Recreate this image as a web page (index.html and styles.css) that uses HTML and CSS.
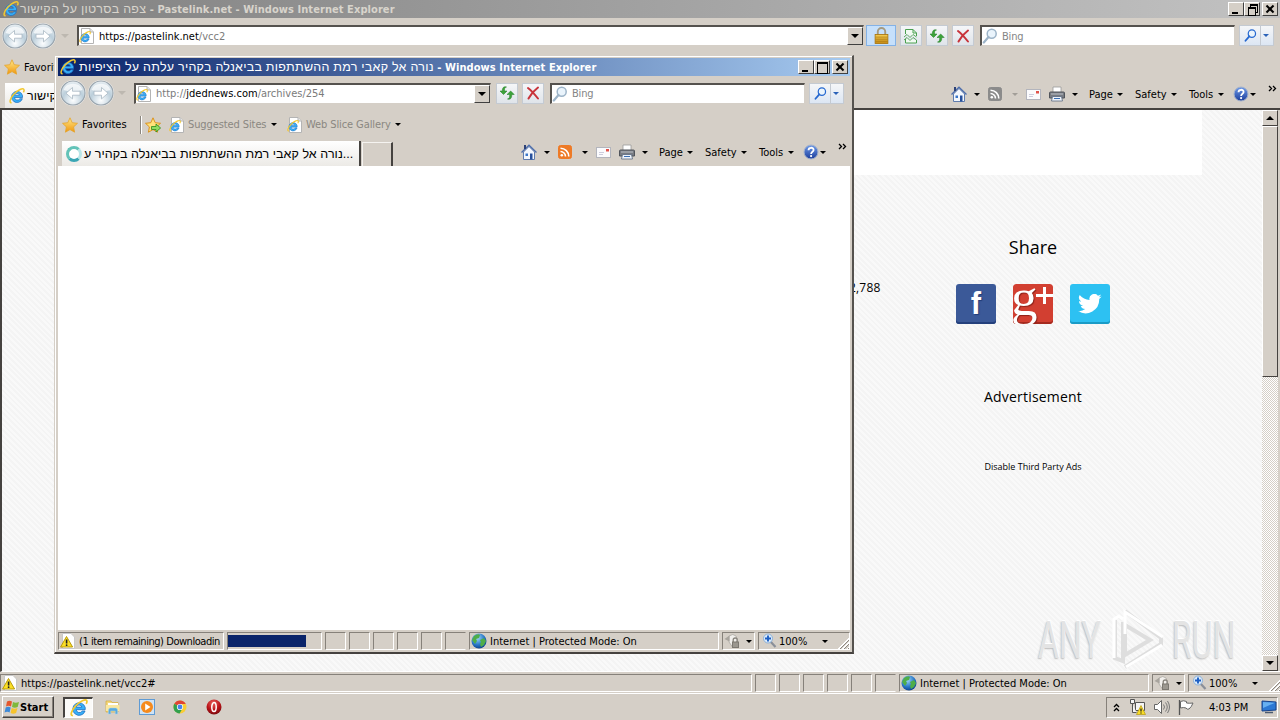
FILE: index.html
```html
<!DOCTYPE html>
<html lang="en">
<head>
  <meta charset="UTF-8">
  <title>Desktop</title>
  <link rel="stylesheet" href="styles.css">
</head>
<body>

  <!-- Icon sprite -->
  <svg class="sprite" width="0" height="0">
    <defs>
      <radialGradient id="gBall" cx="50%" cy="80%" r="80%"><stop offset="0" stop-color="#fdfeff"/><stop offset=".55" stop-color="#bccfdb"/><stop offset="1" stop-color="#e9eff3"/></radialGradient>
      <linearGradient id="gStar" x1="0" y1="0" x2="0" y2="1"><stop offset="0" stop-color="#ffe98a"/><stop offset="1" stop-color="#f0960c"/></linearGradient>
      <linearGradient id="gLock" x1="0" y1="0" x2="0" y2="1"><stop offset="0" stop-color="#f5cf55"/><stop offset="1" stop-color="#c58a12"/></linearGradient>
      <radialGradient id="gRed" cx="45%" cy="25%" r="75%"><stop offset="0" stop-color="#e8605a"/><stop offset=".6" stop-color="#b91218"/><stop offset="1" stop-color="#7c0a0e"/></radialGradient>
      <radialGradient id="gGlobe" cx="40%" cy="30%" r="75%"><stop offset="0" stop-color="#9fd8f8"/><stop offset=".6" stop-color="#2a78c8"/><stop offset="1" stop-color="#0c3c88"/></radialGradient>
      <linearGradient id="gHelp" x1="0" y1="0" x2="0" y2="1"><stop offset="0" stop-color="#6f9be8"/><stop offset="1" stop-color="#1b3d9c"/></linearGradient>
    </defs>
    <symbol id="ie" viewBox="0 0 16 16">
      <path d="M13.500 9.500H5.400a3 3 0 0 0 5.500 1.200h2.500a5.600 5.600 0 1 1 .1-3.200Z M5.500 7.200h5a2.600 2.600 0 0 0-5 0Z" fill="#38b0f8" stroke="#1a6cc0" stroke-width=".7" fill-rule="evenodd"/>
      <path d="M2.600 14.600C-.2 15.200 1 10.500 5 6.100S13.800-.2 14.800 1.300c.5.8.2 2-.4 3" fill="none" stroke="#f3c82f" stroke-width="1.500"/>
    </symbol>
    <symbol id="page" viewBox="0 0 16 16">
      <path d="M2.500.5h8.500l3.500 3.500v11.500h-12z" fill="#fff" stroke="#b4b4b4"/>
      <path d="M11 .5v3.500h3.500" fill="#e4e4e4" stroke="#b4b4b4"/>
      <svg x="0" y="3" width="12" height="12" viewBox="0 0 16 16"><use href="#ie"/></svg>
    </symbol>
    <symbol id="back" viewBox="0 0 26 26">
      <circle cx="13" cy="13" r="12" fill="url(#gBall)" stroke="#9aa5ae" stroke-width="1.200"/>
      <path d="M3.500 10a10 9 0 0 1 19 0Q13 13 3.500 10" fill="#fff" opacity=".7"/>
      <path d="M6 13.200l6.500-5.700v3.700H20v4h-7.500v3.700z" fill="#fff" stroke="#a9b8c3" stroke-width=".8"/>
    </symbol>
    <symbol id="star" viewBox="0 0 16 16"><path d="M8 .8l2.200 4.900 5.300.6-3.900 3.600 1 5.300L8 12.600l-4.600 2.600 1-5.300L.5 6.300l5.300-.6z" fill="url(#gStar)" stroke="#e5a52c" stroke-width=".8"/></symbol>
    <symbol id="staradd" viewBox="0 0 16 16">
      <path d="M8 .8l2.200 4.900 5.300.6-3.900 3.600 1 5.300L8 12.600l-4.600 2.600 1-5.300L.5 6.300l5.300-.6z" fill="#ffe27a" stroke="#d98b12" stroke-width=".9"/>
      <path d="M6.500 9.500h4.500V7l4.600 4-4.600 4v-2.500H6.500z" fill="#8fdc62" stroke="#2c8a1a" stroke-width=".8"/>
    </symbol>
    <symbol id="home" viewBox="0 0 16 16">
      <path d="M2.500 8v7.500h11V8L8 2.500z" fill="#f3f7fd" stroke="#5f7cae"/>
      <path d="M.5 8.500L8 1.200l7.500 7.300" fill="none" stroke="#4d6eac" stroke-width="1.300"/>
      <path d="M3 1h2v4H3z" fill="#2d4277"/><path d="M4.500 9.500H7V12H4.500z" fill="#3b77c9"/><path d="M9 9.500h2.500v6H9z" fill="#27509c"/>
    </symbol>
    <symbol id="rss" viewBox="0 0 14 14">
      <rect x=".5" y=".5" width="13" height="13" rx="2" fill="currentColor" stroke="currentColor"/>
      <circle cx="3.800" cy="10.200" r="1.300" fill="#fff"/><path d="M2.500 6.500a5 5 0 0 1 5 5M2.500 3.200a8.300 8.300 0 0 1 8.300 8.300" fill="none" stroke="#fff" stroke-width="1.600"/>
    </symbol>
    <symbol id="mail" viewBox="0 0 15 11"><rect x=".5" y=".5" width="14" height="10" fill="#fbfbfd" stroke="#b3b5bd"/><path d="M10 2h3v2.500h-3z" fill="#e0524a"/><path d="M3 5.500h5M3 7.500h4" stroke="#ccd"/></symbol>
    <symbol id="printer" viewBox="0 0 16 16">
      <path d="M4 1h8v6H4z" fill="#fff" stroke="#999" stroke-width=".8"/>
      <path d="M1.500 6h13a1 1 0 0 1 1 1v5H.5V7a1 1 0 0 1 1-1z" fill="#777b82" stroke="#50545b"/>
      <path d="M2 8h12" stroke="#c0c4ca"/><path d="M3.500 10.500h9l1 4.500h-11z" fill="#eef3fa" stroke="#5b6a80" stroke-width=".8"/><path d="M5 12.500h6" stroke="#3a6fb4"/>
    </symbol>
    <symbol id="help" viewBox="0 0 16 16">
      <circle cx="8" cy="8" r="7" fill="url(#gHelp)" stroke="#a5b3cc"/>
      <path d="M5.500 6.200C5.500 3 10.600 3 10.600 6c0 1.800-2.500 1.800-2.500 4" fill="none" stroke="#fff" stroke-width="1.800"/><circle cx="8.100" cy="12.100" r="1.100" fill="#fff"/>
    </symbol>
    <symbol id="refresh" viewBox="0 0 16 16">
      <path d="M7.500 2C5.500 2.200 5.500 4 5.500 6H8L4.500 9.500 1 6h2.300C3.300 3 4.500 1 7.500 2z" fill="#3da33a" stroke="#1f7a22" stroke-width=".5"/>
      <path d="M8.500 14c2-.2 2.200-2 2.200-4.500H8L11.700 6l3.500 3.500h-2.400c0 3.500-1.300 5.500-4.300 4.500z" fill="#3da33a" stroke="#1f7a22" stroke-width=".5"/>
    </symbol>
    <symbol id="stop" viewBox="0 0 16 16"><path d="M3 3q4 3 10 10.500M13 2.500Q7 7 3.500 13.500" fill="none" stroke="#c8333a" stroke-width="2" stroke-linecap="round"/></symbol>
    <symbol id="compat" viewBox="0 0 16 16">
      <path d="M2.500 6V1.500H10L13.500 5v3M2.500 11v4h11v-3" fill="#f2fbf2" stroke="#4ba050"/><path d="M10 1.500V5h3.500" fill="none" stroke="#4ba050"/>
      <path d="M1 9l3-2.500 3 3 3-3 3.500 2.500M1 12l3-2.500 3 3 3-3 3.500 2.500" fill="none" stroke="#4ba050" stroke-width=".9"/>
    </symbol>
    <symbol id="mag" viewBox="0 0 16 16"><circle cx="9.700" cy="5.700" r="4.500" fill="#eaf4fc" stroke="currentColor" stroke-width="1.500"/><path d="M6.500 9L1.800 14.500" stroke="currentColor" stroke-width="2.200" stroke-linecap="round"/></symbol>
    <symbol id="lock" viewBox="0 0 14 16"><path d="M3.500 8V4.500a3.500 3.500 0 0 1 7 0V8" fill="none" stroke="#a59a80" stroke-width="1.800"/><rect x="1" y="7" width="12" height="8.500" fill="url(#gLock)" stroke="#a87510" stroke-width=".8"/><path d="M1.500 9.500h11M1.500 11.500h11M1.500 13.500h11" stroke="#a87510" stroke-width=".6"/></symbol>
    <symbol id="warn" viewBox="0 0 16 16">
      <path d="M2.500.5H11L14.500 4v11.500h-12z" fill="#fff" stroke="#c8c8c8"/>
      <path d="M6.500 3.500L12.600 14H.6z" fill="#fbdf25" stroke="#b99a0a" stroke-linejoin="round"/><path d="M6.600 6.500v4" stroke="#222" stroke-width="1.600"/><circle cx="6.600" cy="12.200" r=".9" fill="#222"/>
    </symbol>
    <symbol id="globe" viewBox="0 0 16 16">
      <circle cx="8" cy="8" r="7.500" fill="url(#gGlobe)"/>
      <path d="M3 3q4-3 6-1L8 5 5 6l1 2-2 3-3-4zM9 7l4-2 2 3-2 4-3 2-1-3 1-2z" fill="#4fae48"/>
    </symbol>
    <symbol id="prot" viewBox="0 0 16 16">
      <path d="M5 3q4-3 7 0l1.500 4-5 7L5 9z" fill="#f1efec" stroke="#aaa69f" stroke-width=".8"/><path d="M.5 6l5-3.500v6z" fill="#a8a49d"/><path d="M9.200 9V7a2 2 0 0 1 4 0v2" fill="none" stroke="#88847d" stroke-width="1.300"/><rect x="8.500" y="9" width="6" height="5.500" fill="#9b978f" stroke="#7c7871"/>
    </symbol>
    <symbol id="zoomin" viewBox="0 0 16 16"><path d="M8 8l5.500 6" stroke="#8a8f99" stroke-width="2.200"/><circle cx="6" cy="5.500" r="4.500" fill="#dcebfa" stroke="#8bb0d8"/><path d="M6 2.500v6M3 5.500h6" stroke="#1c5fc4" stroke-width="1.900"/></symbol>
    <symbol id="flagwin" viewBox="0 0 16 16">
      <path d="M3 2.500q2.500-1.500 5 0L7 7.500q-2.500-1.500-5 0z" fill="#e4572c"/><path d="M9 3q2.500 1.300 6 0l-1.300 5q-3 1.300-5.700 0z" fill="#7fb83a"/>
      <path d="M1.700 8.500q2.500-1.500 5 0L5.600 13.500q-2.300-1.500-5 0z" fill="#3d8ad8"/><path d="M7.700 9q2.800 1.300 5.800 0l-1.400 5q-2.800 1.300-5.500 0z" fill="#f6c32c"/>
    </symbol>
    <symbol id="folder" viewBox="0 0 16 16">
      <path d="M1 2h5l1 1.500h6V13H1z" fill="#f3d77c" stroke="#d2ab3c" stroke-width=".7"/><path d="M3 4h10v4H3z" fill="#fff"/><path d="M1 6h13.500v6H1z" fill="#fae79f"/>
      <path d="M3.500 15v-4q0-2 2-2h5q2 0 2 2v4h-2.200v-3H5.700v3z" fill="#5aa9dd" stroke="#9cd0f0" stroke-width=".5"/>
    </symbol>
    <symbol id="wmp" viewBox="0 0 16 16"><rect x=".5" y=".5" width="15" height="15" fill="#cfe3f5" stroke="#5f9bd4"/><circle cx="8" cy="8" r="6" fill="#f58a1d"/><path d="M6.200 4.500L11.500 8l-5.300 3.500z" fill="#fff"/></symbol>
    <symbol id="chrome" viewBox="0 0 16 16">
      <circle cx="8" cy="8" r="6.500" fill="#f9cd33"/><path d="M8 8L2.300 4.800A6.500 6.500 0 0 1 13.800 5H8z" fill="#df4434"/><path d="M2.300 4.800A6.500 6.500 0 0 0 7.600 14.500L10.500 9.500 8 8z" fill="#32a04d"/>
      <circle cx="8" cy="8" r="3.100" fill="#fff"/><circle cx="8" cy="8" r="2.400" fill="#4583ec"/>
    </symbol>
    <symbol id="opera" viewBox="0 0 16 16"><circle cx="8" cy="8" r="7.500" fill="url(#gRed)"/><ellipse cx="8" cy="8" rx="2.200" ry="4.500" fill="none" stroke="#fff" stroke-width="1.500"/></symbol>
    <symbol id="net" viewBox="0 0 16 16">
      <path d="M5.500 3.500h9v8h-9z" fill="#f4f4f4" stroke="#555"/><path d="M.5.5h4v4h-4zM2.500 4.500v9h4" fill="#f4f4f4" stroke="#555"/><path d="M11 6.500l4.500 9h-9z" fill="#f9dc25" stroke="#b59a10" stroke-width=".7"/><path d="M11 9.500v3M11 13.500v1" stroke="#222" stroke-width="1.300"/>
    </symbol>
    <symbol id="speaker" viewBox="0 0 16 16"><path d="M.5 5.500h3l4-4v13l-4-4h-3z" fill="#fff" stroke="#666"/><path d="M9.500 5.500q2 2.500 0 5M11.500 3.500q3.500 4.500 0 9M13.500 2q4 6 0 12" fill="none" stroke="#777"/></symbol>
    <symbol id="flag" viewBox="0 0 16 16"><path d="M1.500 1v15" stroke="#555" stroke-width="1.300"/><path d="M2.500 2.500q3-1.500 6 0v1.500q3 .5 6.500 0-1.500 4-4 6-2 .8-3-1-2.500-1-5.500 0z" fill="#fff" stroke="#666"/></symbol>
    <symbol id="screen" viewBox="0 0 16 14"><path d="M1 1l14 1v8l-14 1z" fill="#2c78d4" stroke="#17428a"/><path d="M2 2l12 .8L2 8z" fill="#67b0f2"/><path d="M4 12.500h8" stroke="#4c5b70" stroke-width="1.500"/></symbol>
    <symbol id="chev" viewBox="0 0 9 7"><path d="M1 1l2.500 2.500L1 6M5 1l2.500 2.500L5 6" fill="none" stroke="#000" stroke-width="1.300"/></symbol>
    <symbol id="bird" viewBox="0 0 24 20"><path d="M23.600 2.400a9.600 9.600 0 0 1-2.800.8A4.800 4.800 0 0 0 23 .5a9.700 9.700 0 0 1-3.100 1.200 4.800 4.800 0 0 0-8.300 4.400A13.700 13.700 0 0 1 1.700 1.100a4.800 4.800 0 0 0 1.500 6.400A4.800 4.800 0 0 1 1 6.900a4.800 4.800 0 0 0 3.900 4.800 4.900 4.900 0 0 1-2.200.1 4.800 4.800 0 0 0 4.500 3.300A9.700 9.700 0 0 1 .1 17.100 13.700 13.700 0 0 0 21.200 4.900a9.800 9.800 0 0 0 2.400-2.500z" fill="#fff"/></symbol>
  </svg>

  <!-- Background browser window -->
  <div class="window main-window">
    <div class="titlebar inactive">
      <svg class="i16"><use href="#ie"/></svg>
      <span class="caption"><span class="heb">צפה בסרטון על הקישור</span> - Pastelink.net - Windows Internet Explorer</span>
      <div class="controls"><b class="min"></b><b class="restore"></b><b class="close"></b></div>
    </div>
    <div class="nav nav-main">
      <svg class="ball"><use href="#back"/></svg>
      <svg class="ball flip"><use href="#back"/></svg>
      <i class="caret pale"></i>
      <div class="address"><svg class="i16"><use href="#page"/></svg><span class="url">https://pastelink.net<em>/vcc2</em></span><b class="drop"><i class="caret"></i></b></div>
      <div class="btn lockbtn"><svg width="15" height="17"><use href="#lock"/></svg></div>
      <div class="btn"><svg class="i16"><use href="#compat"/></svg></div>
      <div class="btn"><svg class="i16"><use href="#refresh"/></svg></div>
      <div class="btn"><svg class="i16"><use href="#stop"/></svg></div>
      <div class="search"><svg class="i16"><use href="#mag"/></svg><span>Bing</span></div>
      <div class="btn go"><svg width="13" height="13"><use href="#mag"/></svg><i class="caret blue"></i></div>
    </div>
    <div class="favbar fav-main">
      <svg class="i16"><use href="#star"/></svg><span class="txt">Favorites</span>
    </div>
    <div class="tabrow row-main">
      <div class="tab"><svg class="i16"><use href="#ie"/></svg><span class="heb">צפה בסרטון על הקישור</span></div>
      <div class="commands">
        <svg class="i16"><use href="#home"/></svg><i class="caret"></i>
        <svg class="rss off"><use href="#rss"/></svg><i class="caret off"></i>
        <svg class="mail"><use href="#mail"/></svg>
        <svg class="i16"><use href="#printer"/></svg><i class="caret"></i>
        <span>Page</span><i class="caret"></i>
        <span>Safety</span><i class="caret"></i>
        <span>Tools</span><i class="caret"></i>
        <svg class="i16"><use href="#help"/></svg><i class="caret"></i>
        <svg class="more"><use href="#chev"/></svg>
      </div>
    </div>
    <div class="view">
      <div class="site">
        <div class="sheet"></div>
        <span class="count">2,788</span>
        <aside class="side">
          <h2>Share</h2>
          <div class="share">
            <a class="fb">f</a>
            <a class="gp">g<sup></sup></a>
            <a class="tw"><svg width="24" height="20"><use href="#bird"/></svg></a>
          </div>
          <h3>Advertisement</h3>
          <p>Disable Third Party Ads</p>
        </aside>
        <div class="brand">
          <span>ANY</span>
          <svg width="56" height="64" viewBox="0 0 56 64"><path d="M4 12v38l8 3V14M14 3l36 27v6L14 59M14 17l25 15-25 15z" fill="none" stroke="#dedede" stroke-width="4"/><path d="M3 50V11l5-3 4 3M14 26V4l38 25M15 59l36-22" fill="none" stroke="#fff" stroke-width="3"/></svg>
          <span>RUN</span>
        </div>
      </div>
      <div class="scroll"><b class="up"><i class="caret"></i></b><b class="thumb"></b><b class="down"><i class="caret"></i></b></div>
    </div>
    <div class="status status-main">
      <div><svg class="i16"><use href="#warn"/></svg><span>https://pastelink.net/vcc2#</span></div>
      <div></div><div></div><div></div><div></div><div></div><div class="open"></div>
      <div><svg class="i16"><use href="#globe"/></svg><span>Internet | Protected Mode: On</span></div>
      <div class="prot"><svg class="i16"><use href="#prot"/></svg><i class="caret"></i></div>
      <div class="zoom"><svg class="i16"><use href="#zoomin"/></svg><span>100%</span><i class="caret"></i><b class="grip"></b></div>
    </div>
  </div>

  <!-- Popup browser window -->
  <div class="window popup">
    <div class="titlebar active">
      <svg class="i16"><use href="#ie"/></svg>
      <span class="caption"><span class="heb">נורה אל קאבי רמת ההשתתפות בביאנלה בקהיר עלתה על הציפיות</span> - Windows Internet Explorer</span>
      <div class="controls"><b class="min"></b><b class="max"></b><b class="close"></b></div>
    </div>
    <div class="nav nav-popup">
      <svg class="ball"><use href="#back"/></svg>
      <svg class="ball flip"><use href="#back"/></svg>
      <i class="caret pale"></i>
      <div class="address"><svg class="i16"><use href="#page"/></svg><span class="url"><em>http://</em>jdednews.com<em>/archives/254</em></span><b class="drop"><i class="caret"></i></b></div>
      <div class="btn"><svg class="i16"><use href="#refresh"/></svg></div>
      <div class="btn"><svg class="i16"><use href="#stop"/></svg></div>
      <div class="search"><svg class="i16"><use href="#mag"/></svg><span>Bing</span></div>
      <div class="btn go"><svg width="13" height="13"><use href="#mag"/></svg><i class="caret blue"></i></div>
    </div>
    <div class="favbar fav-popup">
      <svg class="i16"><use href="#star"/></svg><span class="txt">Favorites</span>
      <b class="sep"></b>
      <svg class="i16"><use href="#staradd"/></svg>
      <svg class="i16"><use href="#page"/></svg><span class="grey">Suggested Sites</span><i class="caret"></i>
      <svg class="i16"><use href="#page"/></svg><span class="grey">Web Slice Gallery</span><i class="caret"></i>
    </div>
    <div class="tabrow row-popup">
      <div class="tab"><b class="spinner"></b><span class="heb">נורה אל קאבי רמת ההשתתפות בביאנלה בקהיר ע...</span></div>
      <div class="newtab"></div>
      <div class="commands">
        <svg class="i16"><use href="#home"/></svg><i class="caret"></i>
        <svg class="rss"><use href="#rss"/></svg><i class="caret"></i>
        <svg class="mail"><use href="#mail"/></svg>
        <svg class="i16"><use href="#printer"/></svg><i class="caret"></i>
        <span>Page</span><i class="caret"></i>
        <span>Safety</span><i class="caret"></i>
        <span>Tools</span><i class="caret"></i>
        <svg class="i16"><use href="#help"/></svg><i class="caret"></i>
        <svg class="more"><use href="#chev"/></svg>
      </div>
    </div>
    <div class="blank"></div>
    <div class="status status-popup">
      <div><svg class="i16"><use href="#warn"/></svg><span class="loading">(1 item remaining) Downloadin</span></div>
      <div class="progress"><b></b></div>
      <div></div><div></div><div></div><div></div><div></div><div class="open"></div>
      <div><svg class="i16"><use href="#globe"/></svg><span>Internet | Protected Mode: On</span></div>
      <div class="prot"><svg class="i16"><use href="#prot"/></svg><i class="caret"></i></div>
      <div class="zoom"><svg class="i16"><use href="#zoomin"/></svg><span>100%</span><i class="caret"></i><b class="grip"></b></div>
    </div>
  </div>

  <!-- Taskbar -->
  <div class="taskbar">
    <div class="start"><svg class="i16"><use href="#flagwin"/></svg><span>Start</span></div>
    <div class="task"><svg width="18" height="18"><use href="#ie"/></svg></div>
    <svg class="i16"><use href="#folder"/></svg>
    <svg class="i16"><use href="#wmp"/></svg>
    <svg class="i16"><use href="#chrome"/></svg>
    <svg class="i16"><use href="#opera"/></svg>
    <div class="tray">
      <svg width="7" height="9" viewBox="0 0 7 9"><path d="M1 4l2.500-2.500L6 4M1 8l2.500-2.500L6 8" fill="none" stroke="#000" stroke-width="1.300"/></svg>
      <svg class="i16"><use href="#net"/></svg>
      <svg class="i16"><use href="#speaker"/></svg>
      <svg class="i16"><use href="#flag"/></svg>
      <span>4:03 PM</span>
      <svg width="16" height="14"><use href="#screen"/></svg>
    </div>
  </div>

</body>
</html>
```
FILE: styles.css
```css
* {
  margin: 0;
  padding: 0;
  box-sizing: border-box;
}

body {
  width: 1280px;
  height: 720px;
  overflow: hidden;
  position: relative;
  background: #d5cfc7;
  font-family: "DejaVu Sans Condensed", "DejaVu Sans", sans-serif;
  font-stretch: condensed;
  font-size: 11px;
  letter-spacing: 0;
  color: #000;
  white-space: nowrap;
}

svg { display: block; flex: none; }
.sprite { position: absolute; }
.i16 { width: 16px; height: 16px; }
em { font-style: normal; color: #7b7b7b; }
.heb { font-family: "Liberation Sans", Arial, sans-serif; }

.caret {
  width: 0;
  height: 0;
  border: 3px solid transparent;
  border-top-color: #000;
  border-bottom: 0;
}
.caret.off { border-top-color: #a29e98; }
.caret.blue { border-top-color: #2b62b8; }
.caret.pale { border-width: 4px; border-top-color: #bdb8b0; border-bottom: 0; }

/* Windows */
.window { background: #d5cfc7; }

.main-window {
  width: 1280px;
  height: 694px;
  display: flex;
  flex-direction: column;
}

.popup {
  position: absolute;
  left: 54px;
  top: 55px;
  width: 800px;
  height: 599px;
  padding: 1px 1px 1px 3px;
  border: 1px solid #d5cfc7;
  border-right: 2px solid #55524e;
  border-bottom: 2px solid #45423f;
  box-shadow: inset 1px 1px 0 #fff;
  display: flex;
  flex-direction: column;
}

.titlebar {
  display: flex;
  align-items: center;
  height: 18px;
  flex: none;
  font-weight: bold;
  letter-spacing: 0.07px;
}
.titlebar.inactive {
  padding: 0 2px 0 3px;
  background: linear-gradient(90deg, #808080, #c2c2c2);
  color: #d8d4cc;
}
.titlebar.active {
  margin: 1px 1px 0 0;
  padding: 0 2px 0 2px;
  background: linear-gradient(90deg, #0a246a, #a6caf0);
  color: #fff;
}
.titlebar.active .caption { margin-left: 3px; }
.titlebar.inactive .caption { margin-left: 1px; }
.titlebar .heb { font-size: 12.500px; font-weight: normal; letter-spacing: 0.25px; }

.controls { display: flex; margin-left: auto; }
.controls b {
  position: relative;
  width: 16px;
  height: 14px;
  background: #d5cfc7;
  border: 1px solid;
  border-color: #fff #404040 #404040 #fff;
}
.controls .close { margin-left: 2px; }
.controls .min::after {
  content: "";
  position: absolute;
  left: 3px;
  top: 9px;
  width: 6px;
  height: 2px;
  background: #000;
}
.controls .max::after {
  content: "";
  position: absolute;
  left: 2px;
  top: 1px;
  width: 9px;
  height: 9px;
  border: 1px solid #000;
  border-top-width: 2px;
}
.controls .restore::before,
.controls .restore::after {
  content: "";
  position: absolute;
  left: 5px;
  top: 1px;
  width: 6px;
  height: 6px;
  border: 1px solid #000;
  border-top-width: 2px;
}
.controls .restore::after {
  left: 3px;
  top: 4px;
  background: #d5cfc7;
}
.controls .close::before,
.controls .close::after {
  content: "";
  position: absolute;
  left: 2px;
  top: 5px;
  width: 10px;
  height: 2px;
  background: #000;
  transform: rotate(45deg);
}
.controls .close::after { transform: rotate(-45deg); }

/* Navigation row */
.nav {
  display: grid;
  align-items: center;
  flex: none;
}
.nav-main {
  height: 35px;
  padding-left: 2px;
  grid-template-columns: 28px 31px 16px 789px 34px 26px 26px 28px 259px 36px;
}
.nav-popup {
  height: 34px;
  padding-left: 2px;
  grid-template-columns: 28px 30px 16px 362px 26px 28px 259px 36px;
}
.ball {
  width: 26px;
  height: 26px;
  background: #f0eeeb;
  border-radius: 13px;
}
.flip { transform: scaleX(-1); }

.address,
.search {
  display: flex;
  align-items: center;
  height: 21px;
  background: #fff;
  border: 1px solid;
  border-width: 2px 1px 1px 2px;
  border-color: #55524e #d5cfc7 #d5cfc7 #55524e;
}
.nav-main .address { width: 787px; }
.nav-popup .address { width: 357px; }
.nav-main .url { margin-left: 4px; letter-spacing: 0; }
.nav-popup .url { margin-left: 4px; }
.drop {
  display: flex;
  align-items: center;
  justify-content: center;
  width: 16px;
  height: 18px;
  margin-left: auto;
  background: #d5cfc7;
  border: 1px solid;
  border-color: #fff #404040 #404040 #fff;
}
.drop .caret { border-width: 4px; border-bottom: 0; }

.search { width: 255px; color: #858585; }
.search svg { color: #9db4c8; }
.search span { margin-left: 4px; letter-spacing: -0.2px; }

.btn {
  display: flex;
  align-items: center;
  justify-content: center;
  width: 22px;
  height: 21px;
  background: linear-gradient(#f5f6f8, #dfe4ea);
  border: 1px solid #c4cad2;
}
.lockbtn {
  width: 30px;
  background: #c6e0fb;
  border-color: #84b2e6;
}
.btn.go {
  width: 35px;
  justify-content: space-between;
  padding: 0 4px;
  color: #2568d0;
  background: linear-gradient(90deg, transparent 20px, #c4cad2 20px, #c4cad2 21px, transparent 21px), linear-gradient(#f5f6f8, #dce6f3);
}

/* Favorites row */
.favbar { display: flex; align-items: center; flex: none; }
.fav-main { height: 28px; padding-left: 4px; }
.fav-main .txt { margin-left: 4px; }
.fav-popup {
  height: 29px;
  padding-left: 4px;
  display: grid;
  grid-template-columns: 20px 58px 5px 24px 19px 83px 16px 19px 89px 10px;
}
.grey { color: #8a8781; letter-spacing: -0.1px; }
.sep {
  width: 2px;
  height: 18px;
  border-left: 1px solid #8b867e;
  border-right: 1px solid #fff;
}

/* Tabs and command bar */
.tabrow { display: flex; flex: none; }
.row-main {
  height: 29px;
  padding: 2px 0 0 5px;
  border-bottom: 2px solid #45423f;
}
.row-popup { height: 27px; padding-left: 4px; }
.tab {
  display: flex;
  align-items: center;
  background: linear-gradient(#fff, #eceae6);
  border-right: 2px solid #45423f;
}
.tab .heb { font-size: 12.500px; letter-spacing: 0.05px; }
.row-main .tab { width: 300px; height: 25px; padding-left: 4px; }
.row-main .tab .heb { margin-left: 2px; }
.row-popup .tab { width: 299px; height: 25px; margin-top: 2px; padding-left: 4px; }
.row-popup .tab .heb { margin-left: 2px; }
.newtab {
  width: 31px;
  margin-top: 3px;
  margin-left: 1px;
  border: 1px solid #f5f3f0;
  border-right: 2px solid #45423f;
  border-bottom: 0;
}
.spinner {
  width: 16px;
  height: 16px;
  background: #fff;
  border: 3px solid #63c3b8;
  border-right-color: #b9e6e8;
  border-bottom-color: #3aa6b4;
  border-radius: 50%;
}

.commands {
  display: grid;
  align-items: center;
  height: 26px;
  grid-template-columns: 23px 14px 24px 14px 23px 23px 17px 28px 18px 36px 18px 29px 15px 17px 17px 10px;
}
.row-main .commands { margin-left: 646px; height: 22px; }
.row-popup .commands { margin-left: 128px; }
.commands .rss { width: 14px; height: 14px; color: #ee7a26; }
.commands .rss.off { color: #8b8b8b; }
.commands .mail { width: 15px; height: 11px; }
.commands .more { width: 9px; height: 7px; margin: -12px 0 0 1px; }

/* Page area of the main window */
.view {
  display: flex;
  height: 562px;
  padding-right: 2px;
  border-left: 2px solid #45423f;
  border-bottom: 1px solid #fff;
  flex: none;
}
.site {
  position: relative;
  flex: 1;
  overflow: hidden;
  background: repeating-linear-gradient(45deg, #f9f9f9 0 2px, #f4f4f4 2px 4px);
}
.sheet {
  width: 1120px;
  height: 65px;
  margin-left: 80px;
  background: #fff;
}
.count {
  position: absolute;
  left: 847px;
  top: 169px;
  font-family: "Open Sans", sans-serif;
  font-stretch: normal;
  font-size: 12px;
  letter-spacing: 0.2px;
}
.side {
  width: 200px;
  margin-left: 931px;
  padding-top: 58px;
  text-align: center;
  font-family: "Open Sans", sans-serif;
  font-stretch: normal;
}
.side h2 { font-size: 18px; line-height: 28px; font-weight: normal; }
.share { display: flex; gap: 17px; justify-content: center; margin-top: 23px; }
.share a {
  display: flex;
  align-items: center;
  justify-content: center;
  position: relative;
  width: 40px;
  height: 40px;
  border-radius: 3px;
  color: #fff;
}
.share .fb { background: #3b5998; box-shadow: inset 0 -2px 0 #24407c; font: bold 31px/40px "Liberation Sans", sans-serif; text-shadow: 1px 1px 1px #223c78; }
.share .gp { background: #d23f31; box-shadow: inset 0 -2px 0 #a52a1f; font: 53px/26px "Liberation Serif", serif; text-shadow: 1px 1px 1px #8d2118; justify-content: flex-start; align-items: flex-start; text-indent: -2px; clip-path: inset(0 round 3px); }
.gp sup {
  position: absolute;
  left: 23px;
  top: 3px;
  width: 17px;
  height: 17px;
  background: linear-gradient(#fff, #fff) 50% 0 / 3px 17px no-repeat, linear-gradient(#fff, #fff) 0 50% / 17px 3px no-repeat;
}
.tw { background: #2dc1f2; box-shadow: inset 0 -2px 0 #1a9bc6; }
.side h3 { margin-top: 63px; font-size: 14px; line-height: 20px; font-weight: normal; letter-spacing: 0.2px; }
.side p { margin-top: 53px; font-size: 9px; line-height: 14px; }

.brand {
  position: absolute;
  left: 1036px;
  top: 498px;
  display: flex;
  align-items: center;
  font: 51px "Roboto", sans-serif;
  color: #e4e4e4;
  text-shadow: 1px -1px 0 #fff, -1px 1px 2px #bbb;
}
.brand span { width: 64px; transform: scaleX(0.63); transform-origin: 0 50%; }
.brand svg { margin: 0 5px 0 9px; }

/* Scrollbar */
.scroll {
  display: flex;
  flex-direction: column;
  width: 16px;
  background: repeating-conic-gradient(#fff 0 25%, #d5cfc7 0 50%) 0 0 / 2px 2px;
}
.scroll b {
  display: flex;
  align-items: center;
  justify-content: center;
  height: 16px;
  background: #d5cfc7;
  border: 1px solid;
  border-color: #fff #45423f #45423f #fff;
}
.scroll .caret { border-width: 4px; border-bottom: 0; }
.up .caret { transform: scaleY(-1); }
.scroll .thumb { height: 251px; }
.scroll .down { margin-top: auto; }

/* Blank page of the popup */
.blank {
  flex: 1;
  margin-right: 1px;
  background: #fff;
}

/* Status bars */
.status {
  display: grid;
  align-items: center;
  column-gap: 3px;
  flex: none;
}
.status-main {
  height: 22px;
  padding-top: 1px;
  grid-template-columns: 752px repeat(6, 21px) 250px 33px 93px;
  border-bottom: 1px solid #fff;
}
.status-popup {
  height: 20px;
  margin-top: 1px;
  grid-template-columns: 166px 95px repeat(6, 21px) 250px 33px 92px;
}
.status > div {
  display: flex;
  align-items: center;
  height: 18px;
  overflow: hidden;
  border: 1px solid;
  border-color: #86817a #fff #fff #86817a;
}
.status .open { border-right-color: #d5cfc7; }
.status svg { margin-left: 1px; }
.status span { margin-left: 3px; }
.status .loading { letter-spacing: -0.45px; }
.status .progress b { width: 78px; height: 12px; background: #0a246a; }
.status .prot .caret { margin-left: 6px; }
.status .zoom svg { margin-left: 3px; }
.status .zoom span { margin-left: 1px; width: 43px; }
.grip {
  width: 12px;
  height: 12px;
  margin: 4px 0 0 auto;
  background: repeating-linear-gradient(135deg, #fff 0 1px, #8b867e 1px 2px, #d5cfc7 2px 3px);
  clip-path: polygon(100% 0, 100% 100%, 0 100%);
}

/* Taskbar */
.taskbar {
  display: grid;
  align-items: center;
  height: 26px;
  padding-left: 2px;
  grid-template-columns: 61px 42px 34px 33px 34px 900px 172px;
}
.start {
  display: flex;
  align-items: center;
  width: 52px;
  height: 22px;
  padding-left: 1px;
  font-weight: bold;
  border: 1px solid;
  border-color: #fff #45423f #45423f #fff;
  box-shadow: inset -1px -1px 0 #86817a;
}
.task {
  display: flex;
  align-items: center;
  justify-content: center;
  width: 30px;
  height: 21px;
  background: #fbfaf8;
  border: 1px solid;
  border-width: 2px 1px 1px 2px;
  border-color: #45423f #fff #fff #45423f;
}
.tray {
  display: grid;
  align-items: center;
  height: 21px;
  padding-left: 6px;
  grid-template-columns: 17px 24px 24px 31px 52px 16px;
  border: 1px solid;
  border-color: #86817a #fff #fff #86817a;
}
.tray span { letter-spacing: -0.1px; }
```
